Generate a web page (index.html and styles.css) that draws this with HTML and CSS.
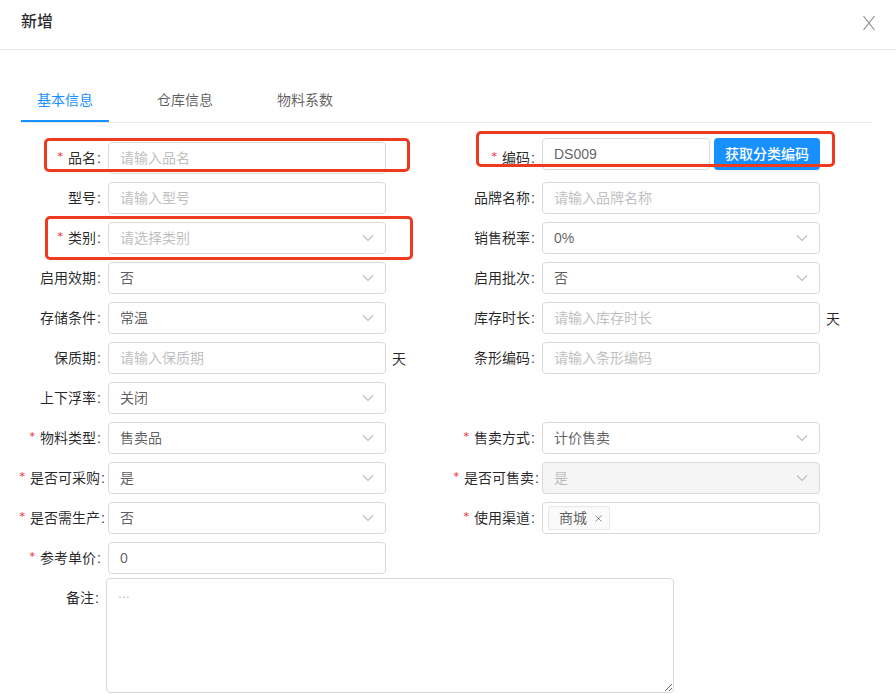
FILE: index.html
```html
<!DOCTYPE html>
<html lang="zh-CN">
<head>
<meta charset="utf-8">
<title>新增</title>
<link rel="stylesheet" href="styles.css">
</head>
<body>
<div class="modal">
  <div class="header">
    <span class="title">新增</span>
    <span class="close" aria-label="关闭">
      <svg width="14" height="16" viewBox="0 0 14 16"><path d="M1.5 1 L12.5 15 M12.5 1 L1.5 15" stroke="#8c8c8c" stroke-width="1.2" fill="none"/></svg>
    </span>
  </div>

  <div class="tabs">
    <div class="tab active">基本信息</div>
    <div class="tab">仓库信息</div>
    <div class="tab">物料系数</div>
  </div>

  <div class="form">
    <!-- row 1 -->
    <div class="item">
      <div class="label"><span class="req">*</span>品名<span class="colon">:</span></div>
      <div class="input"><span class="ph">请输入品名</span></div>
    </div>
    <div class="item r">
      <div class="label"><span class="req">*</span>编码<span class="colon">:</span></div>
      <div class="group">
        <div class="input code"><span class="val">DS009</span></div>
        <div class="btn">获取分类编码</div>
      </div>
    </div>
    <!-- row 2 -->
    <div class="item">
      <div class="label">型号<span class="colon">:</span></div>
      <div class="input"><span class="ph">请输入型号</span></div>
    </div>
    <div class="item r">
      <div class="label">品牌名称<span class="colon">:</span></div>
      <div class="input"><span class="ph">请输入品牌名称</span></div>
    </div>
    <!-- row 3 -->
    <div class="item">
      <div class="label"><span class="req">*</span>类别<span class="colon">:</span></div>
      <div class="input select"><span class="ph">请选择类别</span><svg class="arrow" width="12" height="8" viewBox="0 0 12 8"><path d="M1 1.5 L6 6.5 L11 1.5" stroke="#bfbfbf" stroke-width="1.2" fill="none"/></svg></div>
    </div>
    <div class="item r">
      <div class="label">销售税率<span class="colon">:</span></div>
      <div class="input select"><span class="val">0%</span><svg class="arrow" width="12" height="8" viewBox="0 0 12 8"><path d="M1 1.5 L6 6.5 L11 1.5" stroke="#bfbfbf" stroke-width="1.2" fill="none"/></svg></div>
    </div>
    <!-- row 4 -->
    <div class="item">
      <div class="label">启用效期<span class="colon">:</span></div>
      <div class="input select"><span class="val">否</span><svg class="arrow" width="12" height="8" viewBox="0 0 12 8"><path d="M1 1.5 L6 6.5 L11 1.5" stroke="#bfbfbf" stroke-width="1.2" fill="none"/></svg></div>
    </div>
    <div class="item r">
      <div class="label">启用批次<span class="colon">:</span></div>
      <div class="input select"><span class="val">否</span><svg class="arrow" width="12" height="8" viewBox="0 0 12 8"><path d="M1 1.5 L6 6.5 L11 1.5" stroke="#bfbfbf" stroke-width="1.2" fill="none"/></svg></div>
    </div>
    <!-- row 5 -->
    <div class="item">
      <div class="label">存储条件<span class="colon">:</span></div>
      <div class="input select"><span class="val">常温</span><svg class="arrow" width="12" height="8" viewBox="0 0 12 8"><path d="M1 1.5 L6 6.5 L11 1.5" stroke="#bfbfbf" stroke-width="1.2" fill="none"/></svg></div>
    </div>
    <div class="item r">
      <div class="label">库存时长<span class="colon">:</span></div>
      <div class="input"><span class="ph">请输入库存时长</span></div>
      <span class="suffix">天</span>
    </div>
    <!-- row 6 -->
    <div class="item">
      <div class="label">保质期<span class="colon">:</span></div>
      <div class="input"><span class="ph">请输入保质期</span></div>
      <span class="suffix">天</span>
    </div>
    <div class="item r">
      <div class="label">条形编码<span class="colon">:</span></div>
      <div class="input"><span class="ph">请输入条形编码</span></div>
    </div>
    <!-- row 7 -->
    <div class="item">
      <div class="label">上下浮率<span class="colon">:</span></div>
      <div class="input select"><span class="val">关闭</span><svg class="arrow" width="12" height="8" viewBox="0 0 12 8"><path d="M1 1.5 L6 6.5 L11 1.5" stroke="#bfbfbf" stroke-width="1.2" fill="none"/></svg></div>
    </div>
    <div class="item r"></div>
    <!-- row 8 -->
    <div class="item">
      <div class="label"><span class="req">*</span>物料类型<span class="colon">:</span></div>
      <div class="input select"><span class="val">售卖品</span><svg class="arrow" width="12" height="8" viewBox="0 0 12 8"><path d="M1 1.5 L6 6.5 L11 1.5" stroke="#bfbfbf" stroke-width="1.2" fill="none"/></svg></div>
    </div>
    <div class="item r">
      <div class="label"><span class="req">*</span>售卖方式<span class="colon">:</span></div>
      <div class="input select"><span class="val">计价售卖</span><svg class="arrow" width="12" height="8" viewBox="0 0 12 8"><path d="M1 1.5 L6 6.5 L11 1.5" stroke="#bfbfbf" stroke-width="1.2" fill="none"/></svg></div>
    </div>
    <!-- row 9 -->
    <div class="item">
      <div class="label tight"><span class="req">*</span>是否可采购<span class="colon">:</span></div>
      <div class="input select"><span class="val">是</span><svg class="arrow" width="12" height="8" viewBox="0 0 12 8"><path d="M1 1.5 L6 6.5 L11 1.5" stroke="#bfbfbf" stroke-width="1.2" fill="none"/></svg></div>
    </div>
    <div class="item r">
      <div class="label tight"><span class="req">*</span>是否可售卖<span class="colon">:</span></div>
      <div class="input select disabled"><span class="val">是</span><svg class="arrow" width="12" height="8" viewBox="0 0 12 8"><path d="M1 1.5 L6 6.5 L11 1.5" stroke="#bfbfbf" stroke-width="1.2" fill="none"/></svg></div>
    </div>
    <!-- row 10 -->
    <div class="item">
      <div class="label tight"><span class="req">*</span>是否需生产<span class="colon">:</span></div>
      <div class="input select"><span class="val">否</span><svg class="arrow" width="12" height="8" viewBox="0 0 12 8"><path d="M1 1.5 L6 6.5 L11 1.5" stroke="#bfbfbf" stroke-width="1.2" fill="none"/></svg></div>
    </div>
    <div class="item r">
      <div class="label"><span class="req">*</span>使用渠道<span class="colon">:</span></div>
      <div class="input multi"><span class="tag">商城<svg class="tag-x" width="7" height="7" viewBox="0 0 7 7"><path d="M0.5 0.5 L6.5 6.5 M6.5 0.5 L0.5 6.5" stroke="rgba(0,0,0,0.45)" stroke-width="1" fill="none"/></svg></span></div>
    </div>
    <!-- row 11 -->
    <div class="item">
      <div class="label"><span class="req">*</span>参考单价<span class="colon">:</span></div>
      <div class="input"><span class="val">0</span></div>
    </div>
    <div class="item r"></div>
    <!-- row 12 -->
    <div class="item wide">
      <div class="label">备注<span class="colon">:</span></div>
      <textarea class="textarea" placeholder="..."></textarea>
    </div>
  </div>

  <div class="mark mark-name"></div>
  <div class="mark mark-type"></div>
  <div class="mark mark-code"></div>
</div>
</body>
</html>
```

FILE: styles.css
```css
html, body {
  margin: 0;
  padding: 0;
  background: #fff;
}

body {
  font-family: "Liberation Sans", "Noto Sans CJK SC", sans-serif;
  font-size: 14px;
  color: rgba(0, 0, 0, 0.85);
}

.modal {
  position: relative;
  width: 896px;
  height: 694px;
  overflow: hidden;
  background: #fff;
}

/* header */
.header {
  height: 49px;
  border-bottom: 1px solid #e8e8e8;
  display: flex;
  align-items: flex-start;
  justify-content: space-between;
  padding: 0 20px 0 21px;
}

.title {
  margin-top: 11px;
  line-height: 22px;
  font-size: 16px;
  font-weight: 500;
  color: rgba(0, 0, 0, 0.85);
}

.close {
  margin-top: 15px;
  display: flex;
}

/* tabs */
.tabs {
  display: flex;
  margin: 27px 24px 15px 21px;
  border-bottom: 1px solid #e8e8e8;
}

.tab {
  position: relative;
  padding: 13px 16px 11px;
  margin-right: 32px;
  line-height: 21px;
  color: rgba(0, 0, 0, 0.65);
}

.tab.active {
  color: #1890ff;
}

.tab.active::after {
  content: "";
  position: absolute;
  left: 0;
  right: 0;
  bottom: 0;
  height: 2px;
  background: #1890ff;
}

/* form */
.form {
  display: grid;
  grid-template-columns: 425px 1fr;
  margin: 0 24px 0 21px;
}

.item {
  display: flex;
  align-items: center;
  height: 40px;
}

.label {
  flex: none;
  width: 87px;
  display: flex;
  justify-content: flex-end;
  align-items: center;
  white-space: nowrap;
  line-height: 40px;
  color: rgba(0, 0, 0, 0.85);
}

.item.r .label {
  width: 96px;
}

.req {
  color: #f5222d;
  font-family: "DejaVu Sans", sans-serif;
  font-size: 11px;
  margin-right: 5px;
  position: relative;
  top: -1px;
}

.colon {
  margin: 0 7px 0 1px;
}

.label.tight .colon {
  margin-right: 3px;
}

.input {
  box-sizing: border-box;
  flex: none;
  width: 278px;
  height: 32px;
  border: 1px solid #d9d9d9;
  border-radius: 4px;
  padding: 0 11px;
  display: flex;
  align-items: center;
  line-height: 22px;
  background: #fff;
  color: rgba(0, 0, 0, 0.65);
}

.ph {
  color: #bfbfbf;
}

.val {
  color: rgba(0, 0, 0, 0.65);
}

.select {
  justify-content: space-between;
}

.arrow {
  flex: none;
  margin-right: 0;
}

.select.disabled {
  background: #f5f5f5;
}

.select.disabled .val {
  color: rgba(0, 0, 0, 0.25);
}

.suffix {
  margin-left: 6px;
  color: rgba(0, 0, 0, 0.85);
}

/* code + button */
.group {
  display: flex;
  gap: 4px;
  align-self: flex-start;
}

.input.code {
  width: 168px;
}

.btn {
  box-sizing: border-box;
  width: 106px;
  height: 32px;
  border-radius: 4px;
  background: #1890ff;
  color: #fff;
  font-weight: 500;
  display: flex;
  align-items: center;
  justify-content: center;
  line-height: 22px;
  box-shadow: 0 2px 0 rgba(0, 0, 0, 0.045);
}

/* multi select tag */
.multi {
  padding-left: 5px;
}

.tag {
  box-sizing: border-box;
  height: 24px;
  display: flex;
  align-items: center;
  padding: 0 7px 0 10px;
  background: #fafafa;
  border: 1px solid #e8e8e8;
  border-radius: 2px;
  color: rgba(0, 0, 0, 0.65);
  line-height: 22px;
}

.tag-x {
  margin-left: 8px;
}

/* textarea */
.item.wide {
  grid-column: 1 / -1;
  height: auto;
  align-items: flex-start;
}

.item.wide .label {
  width: 85px;
}

.textarea {
  box-sizing: border-box;
  width: 568px;
  height: 115px;
  border: 1px solid #d9d9d9;
  border-radius: 4px;
  padding: 4px 11px;
  margin: 0;
  font-family: "Liberation Sans", "Noto Sans CJK SC", sans-serif;
  font-size: 14px;
  line-height: 1.5;
  color: rgba(0, 0, 0, 0.65);
  background: #fff;
  outline: none;
}

.textarea::placeholder {
  color: #bfbfbf;
}

/* red annotation marks (overlay) */
.mark {
  position: absolute;
  box-sizing: border-box;
  border: 3px solid #ef3a22;
  border-radius: 5px;
  pointer-events: none;
}

.mark-name {
  left: 44px;
  top: 138px;
  width: 366px;
  height: 34px;
}

.mark-type {
  left: 45px;
  top: 216px;
  width: 368px;
  height: 44px;
}

.mark-code {
  left: 476px;
  top: 131px;
  width: 359px;
  height: 36px;
}
```
